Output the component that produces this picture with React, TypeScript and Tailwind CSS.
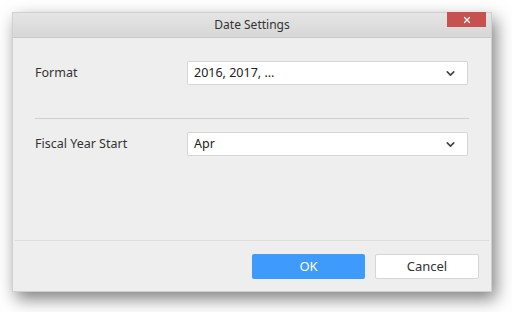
import { ChevronDown, X } from 'lucide-react';

const FIELDS = [
  { label: 'Format', value: '2016, 2017, ...' },
  { label: 'Fiscal Year Start', value: 'Apr' },
];

function Select({ value }: { value: string }) {
  return (
    <div className="w-[281px] h-[24px] bg-white border border-[#d6d6d6] rounded-[2px] flex items-center pl-[6px] pr-[10px]">
      <span className="flex-1 text-[12.5px] text-[#222]">{value}</span>
      <ChevronDown className="w-[13px] h-[13px] text-[#444]" strokeWidth={3} />
    </div>
  );
}

export default function App() {
  return (
    <div className="w-[512px] h-[312px] bg-white pt-[12px] pl-[12px] font-['Noto_Sans',sans-serif]">
      <div className="w-[480px] h-[280px] flex flex-col bg-[#eeeeee] border border-[#d0d0d0] shadow-[4px_7px_16px_rgba(0,0,0,0.5)]">
        {/* Title bar */}
        <div className="h-[25px] flex items-center justify-center relative bg-gradient-to-b from-[#e6e5e6] to-[#d8d7d8] border-b border-[#c9c9c9]">
          <span className="text-[12px] text-[#333]">Date Settings</span>
          <div className="absolute right-[5px] top-[-1px] w-[39px] h-[15px] bg-[#c75050] flex items-center justify-center">
            <X className="w-[10px] h-[10px] text-white" strokeWidth={3} />
          </div>
        </div>

        {/* Body */}
        <div className="flex-1 px-[22px] pt-[23px]">
          <div className="flex items-center h-[24px]">
            <span className="w-[152px] text-[12.5px] text-[#333]">{FIELDS[0].label}</span>
            <Select value={FIELDS[0].value} />
          </div>
          <div className="mt-[33px] mb-[13px] h-px bg-[#cfcfcf] w-[434px]" />
          <div className="flex items-center h-[24px]">
            <span className="w-[152px] text-[12.5px] text-[#333]">{FIELDS[1].label}</span>
            <Select value={FIELDS[1].value} />
          </div>
        </div>

        {/* Footer */}
        <div className="mx-[2px] border-t border-[#dddddd] h-[51px] flex items-start justify-end gap-[10px] pt-[13px] pr-[10px]">
          <button className="w-[113px] h-[25px] bg-[#3e9bfb] rounded-[2px] text-white text-[13px]">OK</button>
          <button className="w-[104px] h-[25px] bg-white border border-[#d6d6d6] rounded-[2px] text-[#333] text-[13px]">Cancel</button>
        </div>
      </div>
    </div>
  );
}
